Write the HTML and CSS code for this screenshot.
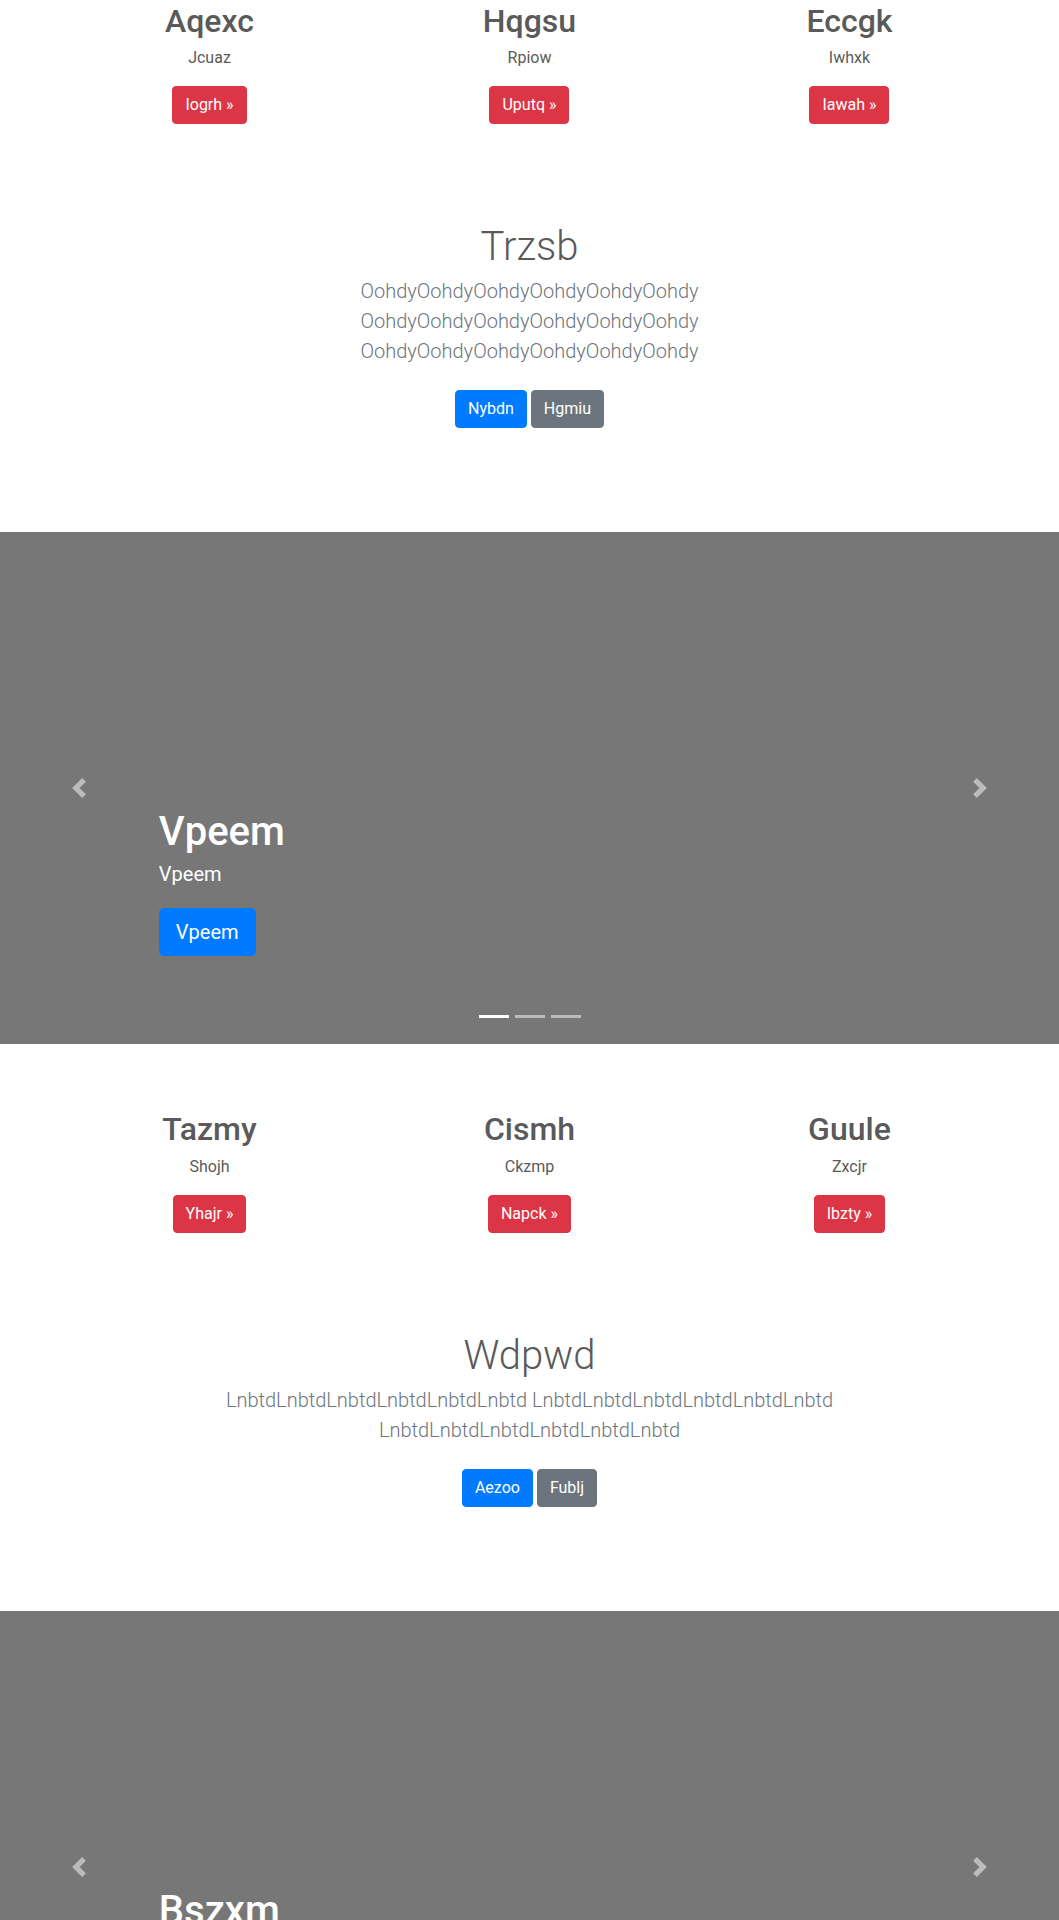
FILE: index.html
```html
<!DOCTYPE html>
<html lang="en">
<head>
<meta charset="utf-8">
<title>Carousel</title>
<link rel="stylesheet" href="styles.css">
</head>
<body>
<main>
  <div class="container marketing">
    <div class="row">
      <div class="col">
        <h2 class="col-title">Aqexc</h2>
        <p class="col-text">Jcuaz</p>
        <p class="col-text"><a class="btn btn-danger" href="#" role="button">Iogrh &raquo;</a></p>
      </div>
      <div class="col">
        <h2 class="col-title">Hqgsu</h2>
        <p class="col-text">Rpiow</p>
        <p class="col-text"><a class="btn btn-danger" href="#" role="button">Uputq &raquo;</a></p>
      </div>
      <div class="col">
        <h2 class="col-title">Eccgk</h2>
        <p class="col-text">Iwhxk</p>
        <p class="col-text"><a class="btn btn-danger" href="#" role="button">Iawah &raquo;</a></p>
      </div>
    </div>
  </div>

  <section class="jumbotron">
    <div class="jumbo-container">
      <h1 class="jumbotron-heading">Trzsb</h1>
      <p class="lead">OohdyOohdyOohdyOohdyOohdyOohdy OohdyOohdyOohdyOohdyOohdyOohdy OohdyOohdyOohdyOohdyOohdyOohdy</p>
      <p class="jumbo-actions">
        <a href="#" class="btn btn-primary btn-my">Nybdn</a>
        <a href="#" class="btn btn-secondary btn-my">Hgmiu</a>
      </p>
    </div>
  </section>

  <div class="carousel">
    <ol class="carousel-indicators">
      <li class="indicator active"></li>
      <li class="indicator"></li>
      <li class="indicator"></li>
    </ol>
    <div class="carousel-item">
      <div class="container">
        <div class="carousel-caption">
          <h1 class="caption-title">Vpeem</h1>
          <p class="caption-text">Vpeem</p>
          <p class="caption-text"><a class="btn btn-lg btn-primary" href="#" role="button">Vpeem</a></p>
        </div>
      </div>
    </div>
    <a class="carousel-control carousel-control-prev" href="#" role="button">
      <svg class="control-icon" viewBox="0 0 8 8" aria-hidden="true"><path fill="#fff" d="M5.25 0l-4 4 4 4 1.5-1.5-2.5-2.5 2.5-2.5-1.5-1.5z"/></svg>
    </a>
    <a class="carousel-control carousel-control-next" href="#" role="button">
      <svg class="control-icon" viewBox="0 0 8 8" aria-hidden="true"><path fill="#fff" d="M2.75 0l-1.5 1.5 2.5 2.5-2.5 2.5 1.5 1.5 4-4-4-4z"/></svg>
    </a>
  </div>

  <div class="container marketing">
    <div class="row">
      <div class="col">
        <h2 class="col-title">Tazmy</h2>
        <p class="col-text">Shojh</p>
        <p class="col-text"><a class="btn btn-danger" href="#" role="button">Yhajr &raquo;</a></p>
      </div>
      <div class="col">
        <h2 class="col-title">Cismh</h2>
        <p class="col-text">Ckzmp</p>
        <p class="col-text"><a class="btn btn-danger" href="#" role="button">Napck &raquo;</a></p>
      </div>
      <div class="col">
        <h2 class="col-title">Guule</h2>
        <p class="col-text">Zxcjr</p>
        <p class="col-text"><a class="btn btn-danger" href="#" role="button">Ibzty &raquo;</a></p>
      </div>
    </div>
  </div>

  <section class="jumbotron">
    <div class="jumbo-container">
      <h1 class="jumbotron-heading">Wdpwd</h1>
      <p class="lead">LnbtdLnbtdLnbtdLnbtdLnbtdLnbtd LnbtdLnbtdLnbtdLnbtdLnbtdLnbtd LnbtdLnbtdLnbtdLnbtdLnbtdLnbtd</p>
      <p class="jumbo-actions">
        <a href="#" class="btn btn-primary btn-my">Aezoo</a>
        <a href="#" class="btn btn-secondary btn-my">Fublj</a>
      </p>
    </div>
  </section>

  <div class="carousel">
    <ol class="carousel-indicators">
      <li class="indicator active"></li>
      <li class="indicator"></li>
      <li class="indicator"></li>
    </ol>
    <div class="carousel-item">
      <div class="container">
        <div class="carousel-caption">
          <h1 class="caption-title">Bszxm</h1>
          <p class="caption-text">Bszxm</p>
          <p class="caption-text"><a class="btn btn-lg btn-primary" href="#" role="button">Bszxm</a></p>
        </div>
      </div>
    </div>
    <a class="carousel-control carousel-control-prev" href="#" role="button">
      <svg class="control-icon" viewBox="0 0 8 8" aria-hidden="true"><path fill="#fff" d="M5.25 0l-4 4 4 4 1.5-1.5-2.5-2.5 2.5-2.5-1.5-1.5z"/></svg>
    </a>
    <a class="carousel-control carousel-control-next" href="#" role="button">
      <svg class="control-icon" viewBox="0 0 8 8" aria-hidden="true"><path fill="#fff" d="M2.75 0l-1.5 1.5 2.5 2.5-2.5 2.5 1.5 1.5 4-4-4-4z"/></svg>
    </a>
  </div>
</main>
</body>
</html>
```

FILE: styles.css
```css
*, *::before, *::after {
  box-sizing: border-box;
}

html, body {
  margin: 0;
  padding: 0;
}

body {
  font-family: Roboto, "Liberation Sans", Arial, sans-serif;
  font-size: 16px;
  line-height: 1.5;
  color: #5a5a5a;
  background: #fff;
}

.container {
  width: 100%;
  max-width: 960px;
  margin: 0 auto;
  padding: 0 15px;
}

.row {
  display: flex;
  flex-wrap: wrap;
  margin: 0 -15px;
}

.col {
  flex: 0 0 33.3333%;
  max-width: 33.3333%;
  padding: 0 15px;
  text-align: center;
}

/* box stays 38.4px tall; glyphs sit 2px lower to match the reference metrics */
.col-title {
  margin: 0 0 8px;
  padding-top: 4px;
  font-size: 32px;
  font-weight: 500;
  line-height: 34.4px;
}

.col-text {
  margin: 0 12px 16px;
}

.col-text:last-child {
  margin-bottom: 0;
}

.btn {
  display: inline-block;
  font-weight: 400;
  font-size: 16px;
  line-height: 1.5;
  padding: 6px 12px;
  border: 1px solid transparent;
  border-radius: 4px;
  color: #fff;
  text-decoration: none;
  text-align: center;
  vertical-align: middle;
}

.btn-danger {
  background: #dc3545;
  border-color: #dc3545;
}

.btn-primary {
  background: #007bff;
  border-color: #007bff;
}

.btn-secondary {
  background: #6c757d;
  border-color: #6c757d;
}

.btn-lg {
  padding: 8px 16px;
  font-size: 20px;
  line-height: 1.5;
  border-radius: 4.8px;
}

.btn-my {
  margin: 8px 0;
}

/* jumbotron */
.jumbotron {
  padding: 96px 0;
  background: #fff;
}

.jumbo-container {
  max-width: 640px;
  margin: 0 auto;
  padding: 0 15px;
  text-align: center;
}

/* box stays 48px tall; glyphs sit 3px lower */
.jumbotron-heading {
  margin: 0 0 8px;
  padding-top: 6px;
  font-size: 40px;
  font-weight: 300;
  line-height: 42px;
}

.lead {
  margin: 0 0 16px;
  font-size: 20px;
  font-weight: 300;
  color: #6c757d;
}

.jumbo-actions {
  margin: 0;
}

/* carousel */
.carousel {
  position: relative;
  height: 512px;
  margin-bottom: 64px;
  background: #777;
}

.carousel-item {
  position: relative;
  height: 512px;
  background: #777;
}

.carousel-caption {
  position: absolute;
  left: 15%;
  right: 15%;
  bottom: 48px;
  z-index: 10;
  padding: 20px 0;
  color: #fff;
  text-align: left;
}

/* box stays 48px tall; glyphs sit 4px lower */
.caption-title {
  margin: 0 0 8px;
  padding-top: 8px;
  font-size: 40px;
  font-weight: 500;
  line-height: 40px;
}

.caption-text {
  margin: 0 0 20px;
  font-size: 20px;
  line-height: 1.4;
}

.carousel-indicators {
  position: absolute;
  left: 0;
  right: 0;
  bottom: 0;
  z-index: 15;
  display: flex;
  justify-content: center;
  margin: 0 15% 16px;
  padding: 0;
  list-style: none;
}

.indicator {
  box-sizing: content-box;
  flex: 0 1 auto;
  width: 30px;
  height: 3px;
  margin: 0 3px;
  background-color: #fff;
  background-clip: padding-box;
  border-top: 10px solid transparent;
  border-bottom: 10px solid transparent;
  opacity: 0.5;
}

.indicator.active {
  opacity: 1;
}

.carousel-control {
  position: absolute;
  top: 0;
  bottom: 0;
  z-index: 1;
  width: 15%;
  display: flex;
  align-items: center;
  justify-content: center;
  opacity: 0.5;
}

.carousel-control-prev {
  left: 0;
}

.carousel-control-next {
  right: 0;
}

.control-icon {
  width: 20px;
  height: 20px;
  display: block;
}
```
